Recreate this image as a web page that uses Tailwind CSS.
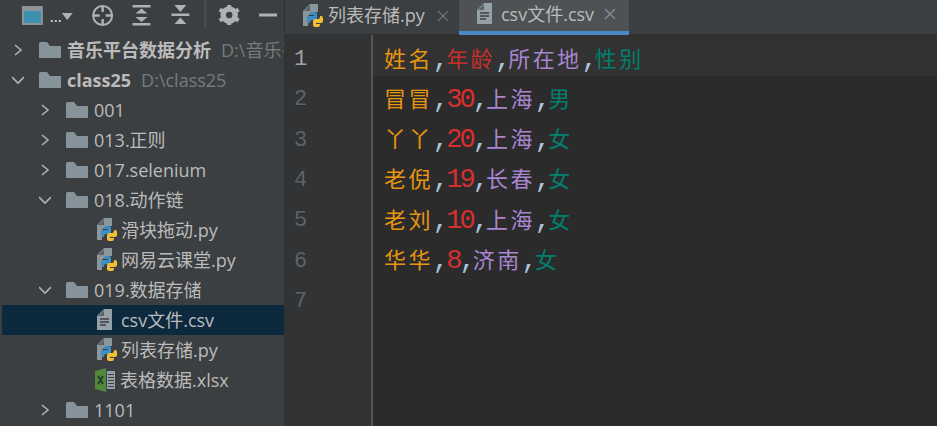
<!DOCTYPE html>
<html><head><meta charset="utf-8"><script src="https://cdn.jsdelivr.net/npm/@tailwindcss/browser@4"></script></head>
<body class="m-0 overflow-hidden">
<svg width="0" height="0" class="absolute">
<defs>
<path id="folder" fill="#87939a" d="M0 1.5 A1.5 1.5 0 0 1 1.5 0 H8 L11 4 H22 V16 H0 Z"/>
<path id="right" fill="none" stroke="#afb1b3" stroke-width="1.6" d="M3 1 L9 6 L3 11"/>
<path id="down" fill="none" stroke="#afb1b3" stroke-width="1.6" d="M0 3 L6 9 L12 3"/>
<g id="py">
<path fill="#8a959c" d="M1 7 L8 0 H16 V8 H10 L6 12 V22 H1 Z"/>
<path fill="#5b6469" d="M2 7 H8 V1 Z"/>
<path fill="#3c8fc4" d="M10 8 h3 a2 2 0 0 1 2 2 v4 a2 2 0 0 1 -2 2 h-3 a2 2 0 0 0 -2 2 v1 h-1 a2 2 0 0 1 -2 -2 v-3 a2 2 0 0 1 2 -2 h5 v-1 h-4 v-1 a2 2 0 0 1 2 -2z"/>
<path fill="#f0bf35" transform="rotate(180 13 15.5)" d="M10 8 h3 a2 2 0 0 1 2 2 v4 a2 2 0 0 1 -2 2 h-3 a2 2 0 0 0 -2 2 v1 h-1 a2 2 0 0 1 -2 -2 v-3 a2 2 0 0 1 2 -2 h5 v-1 h-4 v-1 a2 2 0 0 1 2 -2z"/>
</g>
<g id="csv">
<path fill="#95a1a8" d="M1 7 L8 0 H16 V21 H1 Z"/>
<path fill="#5b6469" d="M2 7 H8 V1 Z"/>
<path stroke="#3c3f41" stroke-width="1.5" d="M4 10 H13 M4 13 H13 M4 16 H10"/>
</g>
</defs>
</svg>
<div class="w-[937px] h-[426px] flex overflow-hidden bg-[#2b2b2b] font-['Open_Sans','Noto_Sans_CJK_SC',sans-serif] text-[18px] text-[#bbbbbb]">

<aside class="w-[285px] shrink-0 bg-[#3c3f41] border-r border-[#323232] flex flex-col">
  <div class="h-[35px] flex items-center relative">
    <svg width="285" height="35" viewBox="0 0 285 35">
      <rect x="22" y="6" width="21" height="19" fill="#8a959c"/>
      <rect x="24" y="11" width="17" height="12" fill="#3d8fae"/>
      <rect x="51" y="20" width="2" height="2" fill="#c8c8c8"/><rect x="55" y="20" width="2" height="2" fill="#c8c8c8"/><rect x="59" y="20" width="2" height="2" fill="#c8c8c8"/>
      <path fill="#afb1b3" d="M62 13 H73 L67.5 20 Z"/>
      <circle cx="103" cy="15.5" r="9.5" fill="none" stroke="#afb1b3" stroke-width="2"/>
      <path stroke="#afb1b3" stroke-width="2.5" d="M103 6 V12 M103 19 V25 M93 15.5 H100 M106 15.5 H113"/>
      <path fill="#afb1b3" d="M133 5 H151 V7.5 H133 Z M133 23 H151 V25.5 H133 Z M142 8.5 L148 13.5 H136 Z M142 22 L148 17 H136 Z"/>
      <path fill="#afb1b3" d="M172 13.5 H190 V16 H172 Z M175 5 H187 L181 12 Z M175 24 H187 L181 17.5 Z"/>
      <rect x="205" y="0" width="2" height="28" fill="#515151"/>
      <circle cx="230" cy="15" r="6.5" fill="none" stroke="#afb1b3" stroke-width="4.5"/>
      <path stroke="#afb1b3" stroke-width="4" d="M230 5 V25 M220.5 9.5 L239.5 20.5 M220.5 20.5 L239.5 9.5"/>
      <circle cx="230" cy="15" r="3.2" fill="#3c3f41"/>
      <rect x="260" y="13.5" width="18" height="3" fill="#afb1b3"/>
    </svg>
  </div>
  <div class="flex flex-col pl-[2px] whitespace-nowrap overflow-hidden">
    <div class="h-[30px] flex items-center pl-[10px]"><svg class="w-[12px] h-[12px] shrink-0"><use href="#right"/></svg><svg class="w-[22px] h-[16px] ml-[15px] shrink-0"><use href="#folder"/></svg><span class="ml-[6px] font-bold">音乐平台数据分析</span><span class="ml-[10px] text-[#787a7c]">D:\音乐平</span></div>
    <div class="h-[30px] flex items-center pl-[10px]"><svg class="w-[12px] h-[12px] shrink-0"><use href="#down"/></svg><svg class="w-[22px] h-[16px] ml-[15px] shrink-0"><use href="#folder"/></svg><span class="ml-[6px] font-bold">class25</span><span class="ml-[10px] text-[#787a7c]">D:\class25</span></div>
    <div class="h-[30px] flex items-center pl-[37px]"><svg class="w-[12px] h-[12px] shrink-0"><use href="#right"/></svg><svg class="w-[22px] h-[16px] ml-[15px] shrink-0"><use href="#folder"/></svg><span class="ml-[6px]">001</span></div>
    <div class="h-[30px] flex items-center pl-[37px]"><svg class="w-[12px] h-[12px] shrink-0"><use href="#right"/></svg><svg class="w-[22px] h-[16px] ml-[15px] shrink-0"><use href="#folder"/></svg><span class="ml-[6px]">013.正则</span></div>
    <div class="h-[30px] flex items-center pl-[37px]"><svg class="w-[12px] h-[12px] shrink-0"><use href="#right"/></svg><svg class="w-[22px] h-[16px] ml-[15px] shrink-0"><use href="#folder"/></svg><span class="ml-[6px]">017.selenium</span></div>
    <div class="h-[30px] flex items-center pl-[37px]"><svg class="w-[12px] h-[12px] shrink-0"><use href="#down"/></svg><svg class="w-[22px] h-[16px] ml-[15px] shrink-0"><use href="#folder"/></svg><span class="ml-[6px]">018.动作链</span></div>
    <div class="h-[30px] flex items-center pl-[94px]"><svg class="w-[21px] h-[24px] shrink-0"><use href="#py"/></svg><span class="ml-[4px]">滑块拖动.py</span></div>
    <div class="h-[30px] flex items-center pl-[94px]"><svg class="w-[21px] h-[24px] shrink-0"><use href="#py"/></svg><span class="ml-[4px]">网易云课堂.py</span></div>
    <div class="h-[30px] flex items-center pl-[37px]"><svg class="w-[12px] h-[12px] shrink-0"><use href="#down"/></svg><svg class="w-[22px] h-[16px] ml-[15px] shrink-0"><use href="#folder"/></svg><span class="ml-[6px]">019.数据存储</span></div>
    <div class="h-[30px] flex items-center pl-[94px] bg-[#0d293e]"><svg class="w-[21px] h-[22px] shrink-0"><use href="#csv"/></svg><span class="ml-[4px]">csv文件.csv</span></div>
    <div class="h-[30px] flex items-center pl-[94px]"><svg class="w-[21px] h-[24px] shrink-0"><use href="#py"/></svg><span class="ml-[4px]">列表存储.py</span></div>
    <div class="h-[30px] flex items-center pl-[93px]"><svg class="w-[22px] h-[24px] shrink-0" viewBox="0 0 22 24"><path fill="#4f8a3c" d="M0 3 L11 0 V24 L0 21 Z"/><path stroke="#2d3b2a" stroke-width="2" d="M3 8 L8 16 M8 8 L3 16"/><path fill="#95a1a8" d="M12 3 H20 V21 H12 Z"/><path stroke="#3c3f41" d="M13 6.5 H19 M13 9.5 H19 M13 12.5 H19 M13 15.5 H19 M13 18.5 H19"/></svg><span class="ml-[3px]">表格数据.xlsx</span></div>
    <div class="h-[30px] flex items-center pl-[37px]"><svg class="w-[12px] h-[12px] shrink-0"><use href="#right"/></svg><svg class="w-[22px] h-[16px] ml-[15px] shrink-0"><use href="#folder"/></svg><span class="ml-[6px]">1101</span></div>
  </div>
</aside>

<main class="flex-1 flex flex-col min-w-0">
  <div class="h-[35px] shrink-0 flex bg-[#3c3f41] border-b border-[#323232]">
    <div class="w-[174px] flex items-center pl-[17px] pb-[3px]"><svg class="w-[21px] h-[24px] shrink-0"><use href="#py"/></svg><span class="ml-[5px]">列表存储.py</span><svg class="ml-[12px] w-[12px] h-[12px]" viewBox="0 0 12 12"><path stroke="#6c6f71" stroke-width="1.4" d="M1 1 L11 11 M11 1 L1 11"/></svg></div>
    <div class="w-[170px] flex items-center pl-[17px] pb-[3px] bg-[#4e5254] border-b-[4px] border-[#4a88c7] h-[35px]"><svg class="w-[21px] h-[22px] shrink-0"><use href="#csv"/></svg><span class="ml-[4px]">csv文件.csv</span><svg class="ml-[10px] w-[12px] h-[12px]" viewBox="0 0 12 12"><path stroke="#8b8e90" stroke-width="1.4" d="M1 1 L11 11 M11 1 L1 11"/></svg></div>
  </div>
  <div class="flex-1 flex font-['Liberation_Mono','Noto_Sans_CJK_SC',monospace] text-[22px] leading-none">
    <div class="w-[86px] shrink-0 bg-[#313335] text-[#606366] pl-[9px] flex flex-col">
      <div class="h-[41px] flex items-center pt-[9px] text-[#a4a3a3]">1</div>
      <div class="h-[40.4px] mt-[4px] flex items-center">2</div>
      <div class="h-[40.4px] flex items-center">3</div>
      <div class="h-[40.4px] flex items-center">4</div>
      <div class="h-[40.4px] flex items-center">5</div>
      <div class="h-[40.4px] flex items-center">6</div>
      <div class="h-[40.4px] flex items-center">7</div>
    </div>
    <div class="w-[2px] shrink-0 bg-[#555555]"></div>
    <div class="flex-1 flex flex-col whitespace-nowrap text-[#a9c4dc] text-[27px] tracking-[-2.9px]">
      <div class="h-[41px] flex items-center pt-[9px] pl-[11px] bg-[#323232]"><span><span class="text-[22px] tracking-[2.4px] text-[#e6960f]">姓名</span>,<span class="text-[22px] tracking-[2.4px] text-[#c9302c]">年龄</span>,<span class="text-[22px] tracking-[2.4px] text-[#a885d0]">所在地</span>,<span class="text-[22px] tracking-[2.4px] text-[#00806e]">性别</span></span></div>
      <div class="h-[40.4px] mt-[4px] flex items-center pl-[11px]"><span><span class="text-[22px] tracking-[2.4px] text-[#e6960f]">冒冒</span>,<span class="text-[#d62f2f]">30</span>,<span class="text-[22px] tracking-[2.4px] text-[#a885d0]">上海</span>,<span class="text-[22px] tracking-[2.4px] text-[#00806e]">男</span></span></div>
      <div class="h-[40.4px] flex items-center pl-[11px]"><span><span class="text-[22px] tracking-[2.4px] text-[#e6960f]">丫丫</span>,<span class="text-[#d62f2f]">20</span>,<span class="text-[22px] tracking-[2.4px] text-[#a885d0]">上海</span>,<span class="text-[22px] tracking-[2.4px] text-[#00806e]">女</span></span></div>
      <div class="h-[40.4px] flex items-center pl-[11px]"><span><span class="text-[22px] tracking-[2.4px] text-[#e6960f]">老倪</span>,<span class="text-[#d62f2f]">19</span>,<span class="text-[22px] tracking-[2.4px] text-[#a885d0]">长春</span>,<span class="text-[22px] tracking-[2.4px] text-[#00806e]">女</span></span></div>
      <div class="h-[40.4px] flex items-center pl-[11px]"><span><span class="text-[22px] tracking-[2.4px] text-[#e6960f]">老刘</span>,<span class="text-[#d62f2f]">10</span>,<span class="text-[22px] tracking-[2.4px] text-[#a885d0]">上海</span>,<span class="text-[22px] tracking-[2.4px] text-[#00806e]">女</span></span></div>
      <div class="h-[40.4px] flex items-center pl-[11px]"><span><span class="text-[22px] tracking-[2.4px] text-[#e6960f]">华华</span>,<span class="text-[#d62f2f]">8</span>,<span class="text-[22px] tracking-[2.4px] text-[#a885d0]">济南</span>,<span class="text-[22px] tracking-[2.4px] text-[#00806e]">女</span></span></div>
    </div>
  </div>
</main>
</div>
</body></html>
